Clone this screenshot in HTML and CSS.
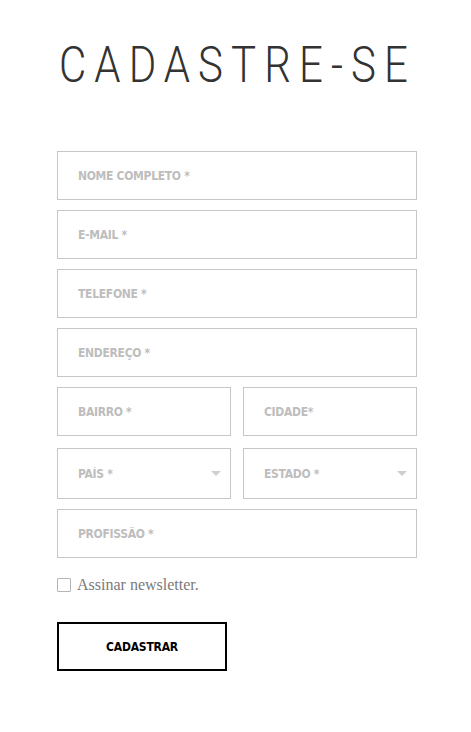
FILE: index.html
```html
<!DOCTYPE html>
<html lang="pt-BR">
<head>
<meta charset="utf-8">
<title>Cadastre-se</title>
<link rel="stylesheet" href="styles.css">
</head>
<body>
<main class="page">
  <h1 class="title"><span class="title-text">CADASTRE-SE</span></h1>
  <form class="form">
    <input class="field" type="text" placeholder="NOME COMPLETO *">
    <input class="field" type="email" placeholder="E-MAIL *">
    <input class="field" type="tel" placeholder="TELEFONE *">
    <input class="field" type="text" placeholder="ENDEREÇO *">
    <div class="row">
      <input class="field" type="text" placeholder="BAIRRO *">
      <input class="field" type="text" placeholder="CIDADE*">
    </div>
    <div class="row row-select">
      <div class="select-wrap">
        <select class="field select"><option>PAÍS *</option></select>
        <span class="arrow"></span>
      </div>
      <div class="select-wrap">
        <select class="field select"><option>ESTADO *</option></select>
        <span class="arrow"></span>
      </div>
    </div>
    <input class="field" type="text" placeholder="PROFISSÃO *">
    <label class="check">
      <span class="box"></span>
      <span class="check-text">Assinar newsletter.</span>
    </label>
    <button class="submit" type="button">CADASTRAR</button>
  </form>
</main>
</body>
</html>
```
FILE: styles.css
```css
html, body {
  margin: 0;
  padding: 0;
  background: #fff;
}
.page {
  width: 360px;
  margin: 0 0 0 57px;
  padding-top: 28px;
}
.title {
  display: flex;
  justify-content: center;
  margin: 0 0 49px 0;
  padding-right: 8px;
  font-family: Roboto, "DejaVu Sans", sans-serif;
  font-weight: 300;
  font-size: 50px;
  line-height: 74px;
  color: #333;
}
.title-text {
  display: inline-block;
  flex: none;
  white-space: nowrap;
  letter-spacing: 9.6px;
  margin-right: -9.6px;
  transform: scaleX(0.84);
  transform-origin: 50% 50%;
}
.form {
  display: flex;
  flex-direction: column;
  gap: 10px;
}
.field {
  box-sizing: border-box;
  width: 100%;
  height: 49px;
  margin: 0;
  border: 1px solid #c6c6c6;
  border-radius: 0;
  padding: 0 0 0 20px;
  background: #fff;
  font-family: "DejaVu Sans Condensed", "DejaVu Sans", sans-serif;
  font-weight: bold;
  font-size: 12px;
  color: #bdbdbd;
  outline: none;
}
.field::placeholder {
  color: #bdbdbd;
  letter-spacing: -0.3px;
}
.row {
  display: grid;
  grid-template-columns: 174px 174px;
  gap: 12px;
}
.row-select {
  margin-top: 2px;
}
.select-wrap {
  position: relative;
}
.select {
  height: 51px;
  appearance: none;
  -webkit-appearance: none;
  letter-spacing: -0.3px;
}
.arrow {
  position: absolute;
  right: 10px;
  top: 23px;
  width: 0;
  height: 0;
  border-left: 5px solid transparent;
  border-right: 5px solid transparent;
  border-top: 5px solid #cfcfcf;
}
.check {
  display: flex;
  align-items: center;
  gap: 6px;
  margin-top: 8px;
  height: 18px;
}
.box {
  box-sizing: border-box;
  width: 14px;
  height: 14px;
  border: 1px solid #b5b5b5;
  border-radius: 1px;
  background: #fff;
}
.check-text {
  font-family: "Liberation Serif", serif;
  font-size: 16px;
  color: #7a7a7a;
}
.submit {
  box-sizing: border-box;
  align-self: flex-start;
  margin-top: 18px;
  width: 170px;
  height: 49px;
  border: 2px solid #000;
  border-radius: 0;
  background: #fff;
  font-family: "DejaVu Sans Condensed", "DejaVu Sans", sans-serif;
  font-weight: bold;
  font-size: 12px;
  letter-spacing: -0.2px;
  color: #000;
  padding: 0;
}
```
